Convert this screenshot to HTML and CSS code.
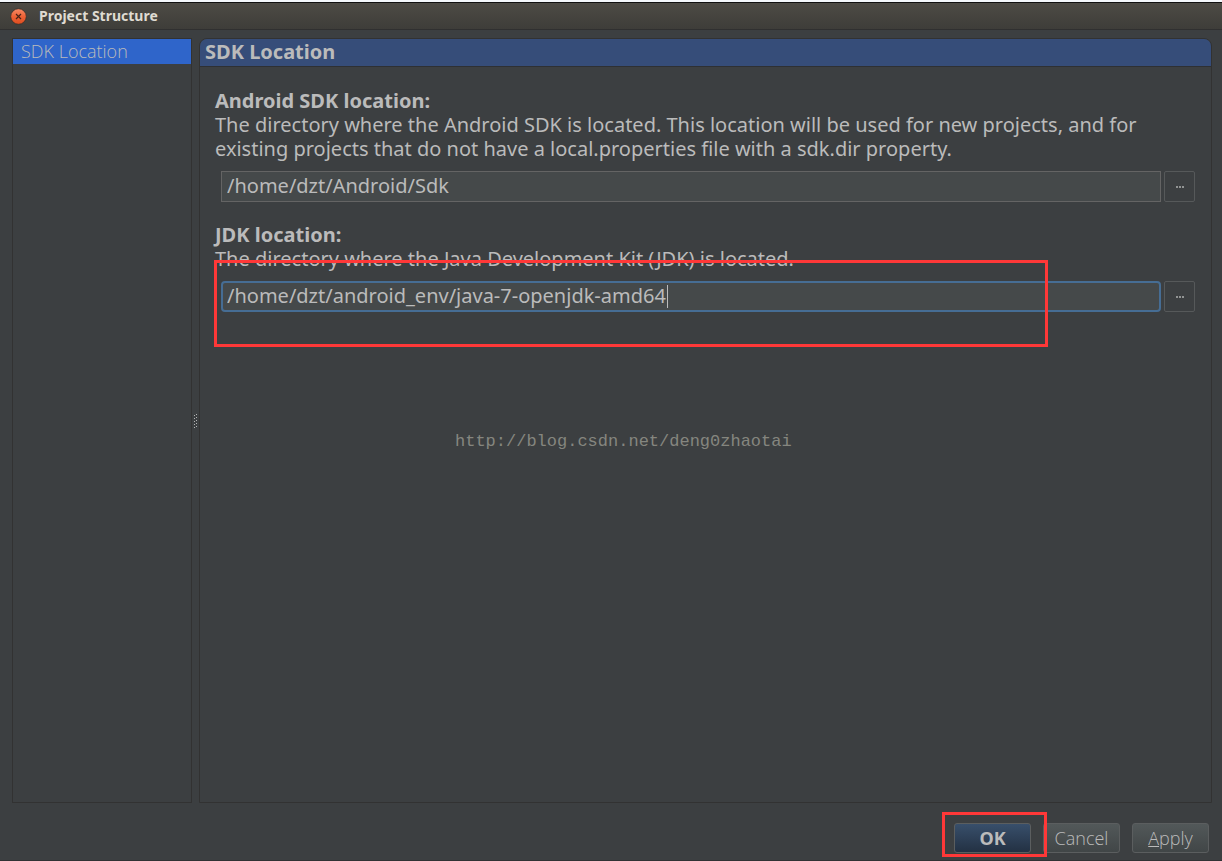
FILE: index.html
```html
<!DOCTYPE html>
<html lang="en">
  <head>
    <meta charset="UTF-8" />
    <meta name="viewport" content="width=device-width, initial-scale=1" />
    <title>Project Structure</title>
    <link rel="stylesheet" href="styles.css">
  </head>
  <body>
    <header class="titlebar">
      <button type="button" class="close" aria-label="Close">
        <svg width="17" height="17" viewBox="0 0 17 17">
          <defs>
            <linearGradient id="closeFill" x1="0" y1="0" x2="0" y2="1">
              <stop offset="0" stop-color="#f68b66" />
              <stop offset="0.5" stop-color="#ee6236" />
              <stop offset="1" stop-color="#dc4c1f" />
            </linearGradient>
          </defs>
          <circle cx="8.5" cy="8.5" r="7.8" fill="url(#closeFill)" stroke="#35302b" stroke-width="0.8" />
          <path d="M6 6l5 5M11 6l-5 5" stroke="#4a2418" stroke-width="1.2" />
        </svg>
      </button>
      <h1 class="window-title">Project Structure</h1>
    </header>

    <main class="content">
      <nav class="sidebar">
        <a class="sidebar-item" href="#sdk">SDK Location</a>
      </nav>

      <div class="splitter">
        <svg width="5" height="16" viewBox="0 0 5 16" fill="#b5b5b5">
          <path d="M3 1h1v1h-1zM1 2h1v1h-1zM3 4h1v1h-1zM1 5h1v1h-1zM3 7h1v1h-1zM1 8h1v1h-1zM3 10h1v1h-1zM1 11h1v1h-1zM3 13h1v1h-1zM1 14h1v1h-1z" />
        </svg>
      </div>

      <section class="panel" id="sdk">
        <h2 class="panel-header">SDK Location</h2>
        <div class="panel-body">
          <div class="setting">
            <label class="setting-title" for="sdkPath">Android SDK location:</label>
            <p class="setting-text">The directory where the Android SDK is located. This location will be used for new projects, and for<br />existing projects that do not have a local.properties file with a sdk.dir property.</p>
            <div class="field-row">
              <div class="field">
                <input class="path" type="text" id="sdkPath" value="/home/dzt/Android/Sdk" />
              </div>
              <button type="button" class="browse" aria-label="Browse for SDK">
                <svg width="8" height="2" viewBox="0 0 8 2" fill="#929494"><path d="M0 0h2v2h-2zM3 0h2v2h-2zM6 0h2v2h-2z" /></svg>
              </button>
            </div>
          </div>

          <div class="setting">
            <label class="setting-title" for="jdkPath">JDK location:</label>
            <p class="setting-text">The directory where the Java Development Kit (JDK) is located.</p>
            <div class="field-row">
              <div class="field">
                <input class="path path-active" type="text" id="jdkPath" value="/home/dzt/android_env/java-7-openjdk-amd64" />
                <span class="caret"></span>
              </div>
              <button type="button" class="browse" aria-label="Browse for JDK">
                <svg width="8" height="2" viewBox="0 0 8 2" fill="#929494"><path d="M0 0h2v2h-2zM3 0h2v2h-2zM6 0h2v2h-2z" /></svg>
              </button>
            </div>
            <div class="mark mark-jdk"></div>
          </div>

          <p class="watermark">http://blog.csdn.net/deng0zhaotai</p>
        </div>
      </section>
    </main>

    <footer class="actions">
      <div class="ok-wrap">
        <button type="button" class="btn btn-primary">OK</button>
        <div class="mark mark-ok"></div>
      </div>
      <button type="button" class="btn">Cancel</button>
      <button type="button" class="btn"><u>A</u>pply</button>
    </footer>
  </body>
</html>
```
FILE: styles.css
```css
* {
  box-sizing: border-box;
}

body {
  margin: 0;
  min-height: 100vh;
  display: flex;
  flex-direction: column;
  background-color: #3c3f41;
  border-top: 2px solid #f4f8fc;
  border-bottom: 1px solid #303234;
  color: #bbbbbb;
  font-family: "Noto Sans", "Open Sans", sans-serif;
  font-size: 20px;
  line-height: 24px;
}

h1,
h2,
p {
  margin: 0;
}

button {
  font-family: inherit;
  cursor: pointer;
}

.titlebar {
  display: flex;
  align-items: center;
  gap: 12px;
  height: 28px;
  padding: 0 10px;
  border-top: 1px solid #111111;
  border-bottom: 1px solid #303030;
  background: linear-gradient(#4d4b45, #3e3d39);
}

.close {
  display: flex;
  padding: 0;
  border: none;
  background: none;
}

.window-title {
  font-size: 14px;
  font-weight: bold;
  color: #dfdbd2;
}

.content {
  flex: 1;
  display: flex;
  padding: 8px 10px 0 12px;
}

.sidebar {
  width: 180px;
  border: 1px solid #323232;
}

.sidebar-item {
  display: block;
  padding: 0 8px 1px;
  background-color: #2f65ca;
  color: #bbbbbb;
  font-family: "Open Sans", sans-serif;
  font-size: 18px;
  font-weight: 300;
  text-decoration: none;
}

.splitter {
  display: flex;
  align-items: center;
  justify-content: center;
  width: 7px;
}

.panel {
  flex: 1;
  border: 1px solid #323232;
  border-radius: 8px 8px 0 0;
}

.panel-header {
  height: 28px;
  padding: 1px 5px;
  border-bottom: 1px solid #2e3033;
  border-radius: 7px 7px 0 0;
  background-color: #364d79;
  font-size: 20px;
}

.panel-body {
  padding: 22px 16px 0 15px;
}

.setting {
  position: relative;
  margin-bottom: 21px;
}

.setting-title {
  display: block;
  font-weight: bold;
}

.field-row {
  display: flex;
  gap: 3px;
  margin-top: 10px;
  padding-left: 6px;
}

.field {
  position: relative;
  flex: 1;
}

.path {
  display: block;
  width: 100%;
  height: 31px;
  padding: 0 5px 2px;
  border: 1px solid #646464;
  background-color: #45494a;
  color: #bbbbbb;
  font-family: inherit;
  font-size: 20px;
  outline: none;
}

.path-active {
  padding: 0 4px 2px;
  border: 2px solid #466d94;
  border-radius: 4px;
}

.caret {
  position: absolute;
  top: 4px;
  left: 446px;
  width: 1px;
  height: 23px;
  background-color: #bbbbbb;
}

.browse {
  display: flex;
  align-items: center;
  justify-content: center;
  width: 31px;
  height: 31px;
  padding: 0;
  border: 1px solid #56595a;
  border-radius: 2px;
  background: none;
}

/* red annotation frames */
.mark {
  position: absolute;
  border: 3px solid #ff3838;
  pointer-events: none;
}

.mark-jdk {
  top: 37px;
  left: -1px;
  width: calc(85% + 1px);
  height: 87px;
}

.mark-ok {
  inset: -11px -16px -4px -12px;
}

.watermark {
  margin-top: 118px;
  padding-left: 240px;
  color: #85867f;
  font-family: "Liberation Mono", monospace;
  font-size: 17px;
}

.actions {
  display: flex;
  justify-content: flex-end;
  gap: 12px;
  padding: 20px 13px 7px;
}

.ok-wrap {
  position: relative;
}

.btn {
  display: block;
  width: 77px;
  height: 30px;
  padding: 0;
  border: 1px solid #5b5e5f;
  border-radius: 3px;
  background: linear-gradient(#525859, #414647);
  color: #bbbbbb;
  font-family: "Open Sans", sans-serif;
  font-size: 18px;
  font-weight: 300;
}

.btn-primary {
  background: linear-gradient(#384f6b, #233143);
  font-family: "Noto Sans", sans-serif;
  font-weight: bold;
}
```
